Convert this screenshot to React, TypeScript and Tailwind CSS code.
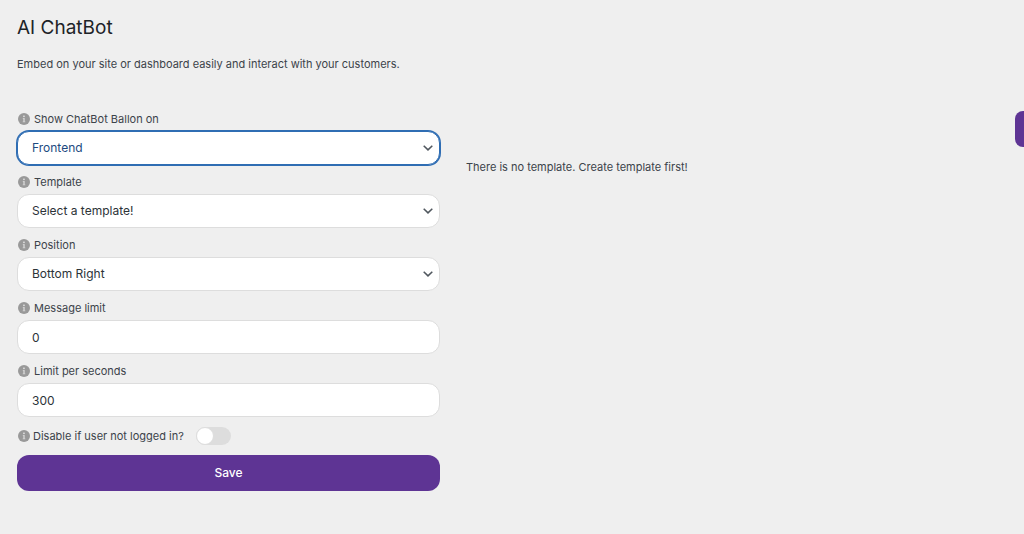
import React, { useState } from "react";

const InfoIcon = () => (
  <svg viewBox="0 0 12 12" className="h-3 w-3 shrink-0" aria-hidden="true">
    <circle cx="6" cy="6" r="6" fill="#999999" />
    <rect x="5.2" y="2.6" width="1.5" height="1.5" fill="#e4e4e4" />
    <path d="M4.8 5h1.9v3.4h.6v.8H4.7v-.8h.6V5.8h-.5z" fill="#d4d4d4" />
  </svg>
);

const Chevron = () => (
  <svg
    viewBox="0 0 10 6"
    className="pointer-events-none absolute top-1/2 right-[7px] h-1.5 w-2.5 -translate-y-1/2"
    fill="none"
    stroke="#50575e"
    strokeWidth="1.5"
    aria-hidden="true"
  >
    <path d="M.7 .7 5 4.9 9.3 .7" />
  </svg>
);

type FieldProps = {
  id: string;
  label: string;
  children: React.ReactNode;
};

const Field = ({ id, label, children }: FieldProps) => (
  <div className="flex flex-col gap-1">
    <label htmlFor={id} className="flex items-center gap-1 pl-px leading-4">
      <InfoIcon />
      {label}
    </label>
    {children}
  </div>
);

const controlStyle =
  "h-[34px] w-full appearance-none rounded-xl border border-[#dddddd] bg-white px-3.5 text-[12px] text-[#2c3338] outline-none";

type SelectFieldProps = {
  id: string;
  label: string;
  options: string[];
  active?: boolean;
};

const SelectField = ({ id, label, options, active }: SelectFieldProps) => (
  <Field id={id} label={label}>
    <div className="relative">
      <select
        id={id}
        className={
          active
            ? "h-[34px] w-full appearance-none rounded-xl border border-[#2f6db3] bg-white px-3.5 text-[12px] text-[#1d4a80] ring-1 ring-[#2f6db3] outline-none"
            : controlStyle
        }
      >
        {options.map((option) => (
          <option key={option}>{option}</option>
        ))}
      </select>
      <Chevron />
    </div>
  </Field>
);

const App = () => {
  const [messageLimit, setMessageLimit] = useState("0");
  const [seconds, setSeconds] = useState("300");
  const [disabled, setDisabled] = useState(false);

  return (
    <div className="relative min-h-screen overflow-x-hidden bg-[#efefef] pt-4 pl-[17px] font-['Inter','Liberation_Sans',sans-serif] text-[11px] text-[#3c434a]">
      <h1 className="text-[19px] leading-6 text-[#1d2327]">AI ChatBot</h1>
      <p className="mt-4 leading-4">
        Embed on your site or dashboard easily and interact with your customers.
      </p>

      <div className="mt-[39px] flex gap-[26px]">
        <form
          className="flex w-[42%] flex-col"
          onSubmit={(e) => e.preventDefault()}
        >
          <div className="flex flex-col gap-[9px]">
            <SelectField
              id="show-on"
              label="Show ChatBot Ballon on"
              options={["Frontend", "Dashboard"]}
              active
            />
            <SelectField
              id="template"
              label="Template"
              options={["Select a template!"]}
            />
            <SelectField
              id="position"
              label="Position"
              options={["Bottom Right", "Bottom Left"]}
            />
            <Field id="message-limit" label="Message limit">
              <input
                id="message-limit"
                value={messageLimit}
                onChange={(e) => setMessageLimit(e.target.value)}
                className={controlStyle}
              />
            </Field>
            <Field id="seconds" label="Limit per seconds">
              <input
                id="seconds"
                value={seconds}
                onChange={(e) => setSeconds(e.target.value)}
                className={controlStyle}
              />
            </Field>
          </div>

          <label className="mt-[9px] flex items-center gap-[3px] pl-px leading-5">
            <InfoIcon />
            Disable if user not logged in?
            <input
              type="checkbox"
              checked={disabled}
              onChange={(e) => setDisabled(e.target.checked)}
              className="ml-[9px] h-[18px] w-[35px] appearance-none rounded-full bg-[#dddddd] before:block before:h-[18px] before:w-[18px] before:rounded-full before:border before:border-[#dddddd] before:bg-white before:content-[''] checked:bg-[#5e3494] checked:before:translate-x-[17px]"
            />
          </label>

          <button
            type="submit"
            className="mt-[9px] h-9 rounded-xl bg-[#5e3494] text-[12px] font-medium text-white"
          >
            Save
          </button>
        </form>

        <p className="mt-12 leading-4">
          There is no template. Create template first!
        </p>
      </div>

      {/* side tab, sticks to the window edge */}
      <button
        type="button"
        aria-label="Open panel"
        className="absolute top-[111px] right-0 h-9 w-[9px] rounded-l-lg bg-[#5e3494]"
      />
    </div>
  );
};

export default App;
